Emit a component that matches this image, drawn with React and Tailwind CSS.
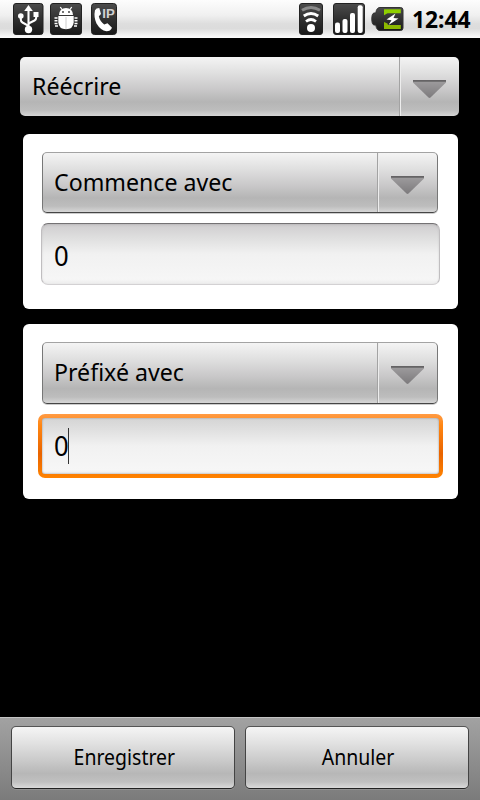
import React from "react";

function UsbIcon() {
  return (
    <svg width="32" height="32" viewBox="0 0 32 32">
      <defs>
        <linearGradient id="tile" x1="0" y1="0" x2="0" y2="1">
          <stop offset="0" stopColor="#4c4c4c" />
          <stop offset="0.5" stopColor="#303030" />
          <stop offset="1" stopColor="#181818" />
        </linearGradient>
      </defs>
      <rect x="0.5" y="0.5" width="29.5" height="31" rx="2.5" fill="url(#tile)" stroke="#222" />
      <g stroke="#fff" fill="none" strokeWidth="2.1">
        <path d="M15.500 26V6" />
        <path d="M15.500 22.800L9.500 19.500Q7.800 18.500 7.800 16.500V13" />
        <path d="M15.500 20.500L21.500 17.500Q23.200 16.500 23.200 14.500V11" />
      </g>
      <g fill="#fff">
        <path d="M15.500 2L19.800 8H11.200Z" />
        <circle cx="15.500" cy="26.500" r="3.700" />
        <circle cx="7.800" cy="13" r="2.800" />
        <rect x="20.500" y="9" width="5" height="5" />
      </g>
    </svg>
  );
}

function BugIcon() {
  return (
    <svg width="32" height="32" viewBox="0 0 32 32">
      <rect x="0.5" y="0.5" width="31" height="31" rx="2.5" fill="url(#tile)" stroke="#222" />
      <g fill="#fff">
        <path d="M9 12Q9.500 5 16 5Q22.500 5 23 12Z" />
        <path d="M8.300 13H23.700V19.500Q23 26.300 16 26.300Q9 26.300 8.300 19.500Z" />
      </g>
      <g stroke="#fff" fill="none">
        <path d="M12 6.500L10.300 4M20 6.500L21.700 4" strokeWidth="1.300" />
        <path
          d="M4.500 15H7.500M4.500 17.700H7.500M4.500 20.400H7.500M5 23.100H8M24.500 15H27.500M24.500 17.700H27.500M24.500 20.400H27.500M24 23.100H27"
          strokeWidth="1.500"
        />
      </g>
      <path d="M16 14V26" stroke="#ccc" strokeWidth="1" />
      <circle cx="13" cy="9" r="0.900" fill="#333" />
      <circle cx="19" cy="9" r="0.900" fill="#333" />
    </svg>
  );
}

function IpPhoneIcon() {
  return (
    <svg width="26" height="32" viewBox="0 0 26 32">
      <rect x="0.5" y="0.5" width="25" height="31" rx="3" fill="url(#tile)" stroke="#222" />
      <path
        d="M4 7.300Q5 5 8.300 5L10 11L7.800 13.300Q9 18.500 13.200 21.500L16.500 20.300L21 24.700Q19.500 28.300 15.500 28.300Q9.500 27.300 5.500 20.500Q2.500 14 4 7.300Z"
        fill="#fff"
      />
      <text
        x="11.300"
        y="14.800"
        fill="#d0d0d0"
        fontSize="12"
        fontWeight="700"
        textLength="12.500"
        lengthAdjust="spacingAndGlyphs"
        fontFamily="Liberation Sans, sans-serif"
      >
        IP
      </text>
    </svg>
  );
}

function WifiIcon() {
  return (
    <svg width="24" height="32" viewBox="0 0 24 32">
      <rect x="0.5" y="0.5" width="23" height="31" rx="2.5" fill="url(#tile)" stroke="#222" />
      <g fill="none">
        <path d="M3 7.300Q12 1.700 21 7.300" stroke="#8a8a8a" strokeWidth="3" />
        <path d="M4.800 13Q12 8 19.200 13" stroke="#fff" strokeWidth="2.900" />
        <path d="M7 18.500Q12 14.500 17 18.500" stroke="#fff" strokeWidth="2.700" />
      </g>
      <circle cx="12" cy="25" r="4" fill="#fff" />
    </svg>
  );
}

function SignalIcon() {
  return (
    <svg width="32" height="32" viewBox="0 0 32 32">
      <rect x="0.5" y="0.5" width="31" height="31" rx="2.5" fill="url(#tile)" stroke="#222" />
      <g fill="#fff">
        <rect x="2" y="19.500" width="5" height="10.500" rx="2" />
        <rect x="9.500" y="16" width="5" height="14" rx="2" />
        <rect x="17" y="10" width="5" height="20" rx="2" />
        <rect x="24.700" y="2.200" width="5" height="27.800" rx="2" />
      </g>
    </svg>
  );
}

function BatteryIcon() {
  return (
    <svg width="33" height="24" viewBox="0 0 33 24">
      <path
        d="M9 .5H29.500Q32 .5 32 3V21Q32 23.500 29.500 23.500H9Q5.500 23.500 4.800 18H3Q.8 17.500.8 12Q.8 6.500 3 6H4.800Q5.500.5 9 .5Z"
        fill="url(#tile)"
        stroke="#333"
      />
      <path d="M13 2.300H29.800V6.300H16.500L13 8.300Z" fill="#8fd000" />
      <path d="M13 22H29.800V18H17L16.500 16.500L13 15Z" fill="#8cb800" />
      <path d="M24.500 6.500L15.500 12.500L20.500 13.200L17.500 18L27.500 11.500L22.500 11Z" fill="#fff" />
    </svg>
  );
}

function StatusBar() {
  return (
    <header className="flex h-[38px] items-start bg-[linear-gradient(#fdfdfd_0%,#f0f0f0_40%,#dedede_62%,#dcdcdc_75%,#f2f2f2_92%,#fcfcfc_100%)] pt-[3px] pl-[13px] pr-[9px]">
      <UsbIcon />
      <div className="ml-[5px]"><BugIcon /></div>
      <div className="ml-[9px]"><IpPhoneIcon /></div>
      <div className="ml-auto"><WifiIcon /></div>
      <div className="ml-[10px]"><SignalIcon /></div>
      <div className="ml-[6px] pt-[4px]"><BatteryIcon /></div>
      <span className="ml-[8px] w-[59px] origin-left scale-x-[0.95] whitespace-nowrap text-[24px] leading-[32px] font-bold">
        12:44
      </span>
    </header>
  );
}

function Arrow() {
  return (
    <svg width="33" height="20" viewBox="0 0 33 20">
      <defs>
        <linearGradient id="arrow" x1="0" y1="0" x2="0" y2="1">
          <stop offset="0" stopColor="#a09ea0" />
          <stop offset="1" stopColor="#7c7a7c" />
        </linearGradient>
      </defs>
      <path d="M0 1H33V3.500L17.500 18.500Q16.500 19.300 15.500 18.500L0 3.500Z" fill="url(#arrow)" />
      <path d="M0 1.800H33" stroke="#656365" strokeWidth="1.800" />
    </svg>
  );
}

function Spinner({ label, className, labelClass }) {
  return (
    <button
      className={
        "flex w-full rounded-[5px] bg-[linear-gradient(#f4f4f4_0%,#dfdfdf_28%,#c9c8c9_55%,#b5b5b5_76%,#bdbdbd_90%,#d6d6d6_100%)] text-left text-[24px] " +
        className
      }
    >
      <span className={"flex flex-1 items-center self-stretch whitespace-nowrap " + labelClass}>
        <span className="origin-left scale-x-[0.965]">{label}</span>
      </span>
      <span className="flex w-[60px] self-stretch border-l border-[#a3a3a3] pt-[22px] pl-[13px] shadow-[inset_1px_0_0_#ededed]">
        <Arrow />
      </span>
    </button>
  );
}

const cardSpinner =
  "border border-t-[#a3a3a3] border-x-[#777] border-b-[#454545] shadow-[0_1px_0_#ccc]";

export default function App() {
  return (
    <div className="flex h-[800px] w-[480px] flex-col overflow-hidden bg-black font-['Noto_Sans',sans-serif] text-black">
      <StatusBar />
      <main className="flex-1 pt-[19px]">
        <div className="ml-[20px] w-[439px]">
          <Spinner label="Réécrire" className="h-[59px]" labelClass="pl-[12px] pb-px" />
        </div>

        <section className="mt-[18px] ml-[23px] h-[175px] w-[435px] rounded-[6px] bg-white pt-[18px]">
          <div className="ml-[19px] w-[396px]">
            <Spinner label="Commence avec" className={"h-[61px] " + cardSpinner} labelClass="pl-[11px] pb-px" />
          </div>
          <div className="mt-[10px] ml-[18px] flex h-[62px] w-[399px] items-center rounded-[7px] border border-t-[#747274] border-x-[#c0bec0] border-b-[#d3d1d3] bg-[linear-gradient(#cfcdcf_0%,#dedede_22%,#f1f1f1_50%,#f6f6f6_92%,#ececec_100%)] pt-[4px] pl-[12px] text-[27px] shadow-[inset_0_1px_2px_#99999960]">
            <span className="origin-left scale-x-95">0</span>
          </div>
        </section>

        <section className="mt-[15px] ml-[23px] h-[175px] w-[435px] rounded-[6px] bg-white pt-[18px]">
          <div className="ml-[19px] w-[396px]">
            <Spinner label="Préfixé avec" className={"h-[62px] " + cardSpinner} labelClass="pl-[11px] pb-[3px]" />
          </div>
          <div className="mt-[10px] ml-[15px] h-[64px] w-[405px] rounded-[7px] bg-[linear-gradient(#ff9b45_0%,#ff8612_18%,#e96400_62%,#ff8200_100%)] p-[4px]">
            <div className="flex h-full items-center rounded-[3px] bg-[linear-gradient(#d4d4d4_0%,#dfdfdf_20%,#f1f1f1_50%,#f6f6f6_92%,#eeeeee_100%)] pl-[12px] text-[27px] shadow-[inset_0_0_2px_#888]">
              <span className="origin-left scale-x-95">0</span>
              <i className="-ml-px h-[36px] w-px bg-[#333]" />
            </div>
          </div>
        </section>
      </main>

      <footer className="flex h-[83px] gap-[10px] border-t border-[#c4c4c4] bg-[linear-gradient(#a2a2a2,#7b7b7b)] pt-[8px] pl-[11px]">
        {["Enregistrer", "Annuler"].map((label) => (
          <button
            key={label}
            className="flex h-[63px] w-[224px] items-center justify-center rounded-[5px] border border-t-[#555] border-x-[#444] border-b-[#222] bg-[linear-gradient(#f5f5f5_0%,#e0e0e0_28%,#cacaca_55%,#b7b7b7_76%,#c0c0c0_90%,#dadada_100%)] pb-[2px] pl-[2px] text-[22px] shadow-[0_1px_0_#919191]"
          >
            <span className="scale-x-[0.885]">{label}</span>
          </button>
        ))}
      </footer>
    </div>
  );
}
